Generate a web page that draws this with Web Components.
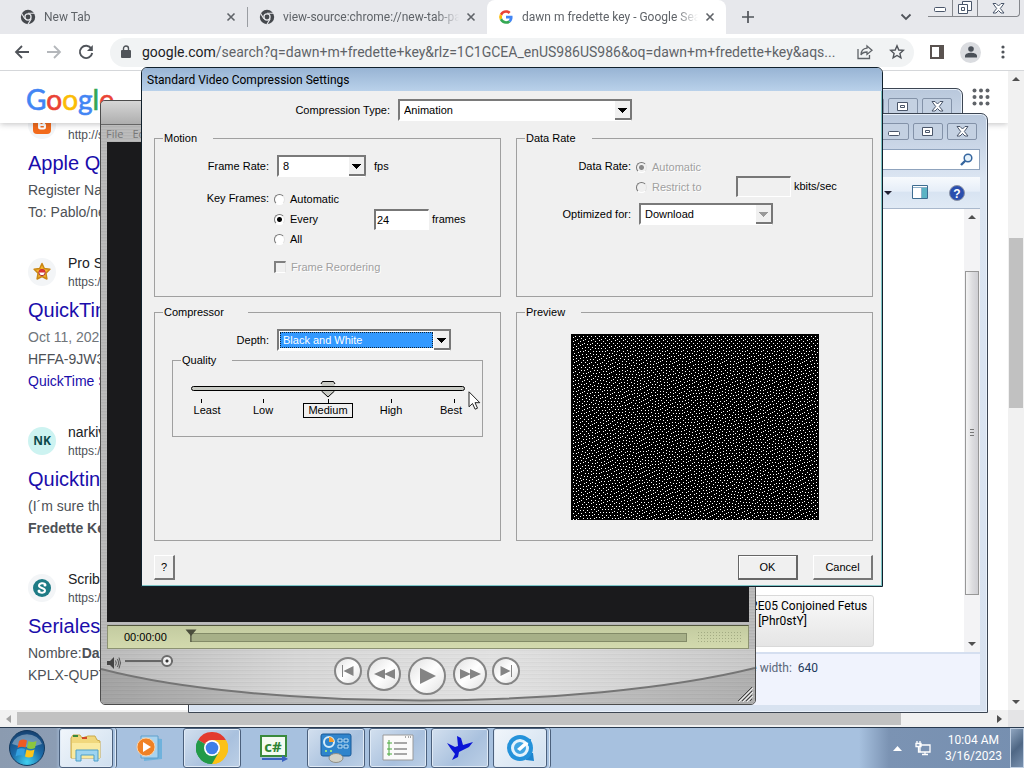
<!DOCTYPE html>
<html lang="en">
<head>
<meta charset="utf-8">
<title>Desktop</title>
<style>
html,body{margin:0;height:100%;overflow:hidden}
body{font-family:"Liberation Sans",Arial,sans-serif;--ui:Roboto,"Segoe UI",sans-serif}
</style>
</head>
<body>
<desk-top></desk-top>
<script>
const define = (name, html, ready) => customElements.define(name, class extends HTMLElement {
  constructor() {
    super();
    const t = document.createElement('template');
    t.innerHTML = '<style>*{box-sizing:border-box}[hidden]{display:none}</style>' + html;
    this.attachShadow({ mode: 'open' }).append(t.content.cloneNode(true));
  }
  connectedCallback() { if (ready) ready(this, this.shadowRoot); }
});

/* ---------- shared pieces ---------- */
define('scroll-bar', `
<style>
:host{display:flex;flex-direction:column;justify-content:space-between;align-items:center;background:#f1f1f1;position:relative;box-sizing:border-box;padding:6px 0}
:host([dir-x]){flex-direction:row;padding:0 6px}
i{width:0;height:0;border:4px solid transparent}
.a{border-top:0;border-bottom:4px solid #505050}
.b{border-bottom:0;border-top:4px solid #505050}
:host([dir-x]) .a{border:4px solid transparent;border-left:0;border-right:5px solid #a3a3a3}
:host([dir-x]) .b{border:4px solid transparent;border-right:0;border-left:5px solid #505050}
.t{position:absolute;background:var(--thumb,#c1c1c1);left:var(--l,1px);right:var(--r,1px);top:var(--t,0);bottom:var(--b,0);border:var(--tb,0)}
.t::after{content:"";position:absolute;left:4px;right:4px;top:calc(50% - 4px);height:8px;background:repeating-linear-gradient(#777 0 1px,transparent 1px 3px);display:var(--grip,none)}
</style><i class="a"></i><span class="t"></span><i class="b"></i>`);

define('caption-buttons', `
<style>
:host{display:flex;gap:4px}
button{width:30px;height:17px;padding:0;border:1px solid #8392a8;border-radius:2px;background:#c4d1e2;display:grid;place-items:center}
button:first-child{width:33px}
.r{display:none}
:host([joined]) .r{display:block}
:host([joined]) .m{display:none}
:host([joined]){gap:0}
:host([joined]) button{border-radius:0;border-left:0;border-top:0;background:none;border-color:#85878c;width:25px}
:host([joined]) button:first-child{border-left:1px solid #85878c;border-radius:0 0 0 4px;width:26px}
:host([joined]) button:last-child{width:42px;border-radius:0 0 4px 0}
svg{fill:#fff;stroke:#4a566a;display:block}
</style>
<button aria-label="Minimize"><svg width="13" height="12"><rect x=".5" y="5.500" width="11" height="4" rx="1"/></svg></button>
<button aria-label="Maximize"><svg class="m" width="12" height="10"><path d="M.5.5h10v8h-10z"/><path d="M3.500 3.500h4v2h-4z"/></svg><svg class="r" width="14" height="14"><path d="M4.500.5h9v9h-9z"/><path d="M.5 3.500h9v9h-9z"/><path d="M3.500 6.500h3v3h-3z"/></svg></button>
<button aria-label="Close"><svg width="13" height="11"><path d="M1 .5h3L6.500 3 9 .5h3L8.300 5.500 12 10H9L6.500 7.500 4 10H1l3.700-4.500z"/></svg></button>`);

/* ---------- browser ---------- */
define('chrome-tab', `
<style>
:host{display:flex;align-items:center;box-sizing:border-box;width:239px;height:34px;padding:0 8px 0 11px;font:12px/16px var(--ui);color:#5f6368;position:relative}
:host([active]){background:#fff;border-radius:8px 8px 0 0}
:host([line]){border-right:1px solid #9a9da2;height:20px}
.t{flex:1;margin:0 4px 0 8px;overflow:hidden;white-space:nowrap;-webkit-mask:linear-gradient(90deg,#000 87%,transparent)}
button{width:16px;height:16px;border:0;background:none;padding:0}
svg{display:block}
::slotted(svg){flex:none}
</style>
<slot name="icon"></slot><span class="t"><slot></slot></span>
<button aria-label="Close tab"><svg width="16" height="16"><path d="M4.500 4.500l7 7m0-7l-7 7" stroke="#5f6368" stroke-width="1.600"/></svg></button>`);

define('search-result', `
<style>
:host{display:block;margin-bottom:29px;white-space:nowrap;color:#4d5156;font-size:14px;line-height:22px}
header{display:flex;align-items:center;gap:12px;height:40px;margin-bottom:4px}
.ic{width:28px;height:28px;border-radius:50%;background:#f3f5f7;display:grid;place-items:center;overflow:hidden}
.n{color:#202124;line-height:20px;min-height:20px}
.u{font-size:12px;line-height:18px}
h3{margin:0 0 2px;font-size:20px;line-height:28px;font-weight:400;color:#1a0dab}
</style>
<header><span class="ic"><slot name="icon"></slot></span><div><div class="n"><slot name="name"></slot></div><div class="u"><slot name="url"></slot></div></div></header>
<h3><slot name="title"></slot></h3><slot></slot>`);

const chromeMono = `<svg slot="icon" width="16" height="16" viewBox="0 0 16 16"><circle cx="8" cy="8" r="7.200" fill="#45484d"/><circle cx="8" cy="8" r="3.700" fill="#e7e8ec"/><circle cx="8" cy="8" r="2.400" fill="#45484d"/><path d="M8 4.300h7M4.800 9.800L1.500 4.200M11.200 9.800L7.800 15.600" stroke="#e7e8ec" stroke-width="1.100"/></svg>`;

define('browser-window', `
<style>
:host{display:flex;flex-direction:column;background:#fff;overflow:hidden}
.tabs{display:flex;align-items:center;background:#e7e8ec;height:34px;padding-left:9px;flex:none}
.tabs .plus{margin-left:13px}
button{border:0;background:none;padding:0;display:block}
svg{display:block}
.push{margin-left:auto;margin-right:14px}
caption-buttons{align-self:flex-start;margin-right:4px}
.bar{display:flex;align-items:center;height:37px;border-bottom:1px solid #d5d7da;padding:0 11px 0 14px;gap:16px;flex:none}
.omni{flex:1;display:flex;align-items:center;height:29px;background:#f1f3f4;border-radius:15px;padding:0 9px 0 11px;gap:11px;min-width:0}
.url{flex:1;min-width:0;overflow:hidden;white-space:nowrap;font:14px/20px var(--ui);color:#5f6368}
.url b{font-weight:400;color:#202124}
.av{width:21px;height:21px;border-radius:50%;background:#dadce0;display:grid;place-items:center}
.view{flex:1;display:flex;min-height:0}
.page{flex:1;position:relative;overflow:hidden;min-width:0}
.top{position:absolute;inset:0 0 auto 0;height:52px;background:#fff;box-shadow:0 1px 6px #20212447;display:flex;justify-content:space-between;align-items:center;padding:0 18px 0 26px;z-index:1}
.logo{font:28px/40px Lato,sans-serif;text-decoration:none;font-weight:400;margin-top:4px;-webkit-text-stroke:.6px currentColor}
.results{padding:34px 0 0 28px}
.results a{color:#1a0dab;text-decoration:none}
.v{width:16px;--t:167px;--b:302px}
.h{display:flex}
.h scroll-bar{flex:1;height:17px;--t:2px;--b:2px;--l:17px;--r:107px}
.h i{width:16px;background:#e4e4e6}
</style>
<div class="tabs">
 <chrome-tab line>${chromeMono}New Tab</chrome-tab>
 <chrome-tab>${chromeMono}view-source:chrome://new-tab-page</chrome-tab>
 <chrome-tab active><svg slot="icon" width="16" height="16" viewBox="-4 -4 56 56"><path fill="#ea4335" d="M24 9.500c3.500 0 6.700 1.200 9.200 3.600l6.900-6.900C35.900 2.400 30.500 0 24 0 14.600 0 6.500 5.400 2.600 13.200l8 6.200C12.400 13.700 17.700 9.500 24 9.500z"/><path fill="#4285f4" d="M47 24.600c0-1.600-.2-3.100-.4-4.600H24v9h12.900c-.6 3-2.200 5.500-4.800 7.200l7.700 6C44.400 38 47 32 47 24.600z"/><path fill="#fbbc05" d="M10.500 28.600a14.500 14.500 0 010-9.200l-8-6.200a24 24 0 000 21.600z"/><path fill="#34a853" d="M24 48c6.500 0 11.900-2.100 15.900-5.800l-7.700-6c-2.200 1.400-4.900 2.300-8.200 2.300-6.300 0-11.600-4.200-13.500-9.900l-8 6.200C6.500 42.600 14.600 48 24 48z"/></svg>dawn m fredette key - Google Search</chrome-tab>
 <button class="plus" aria-label="New tab"><svg width="18" height="18"><path d="M9 3v12M3 9h12" stroke="#50545a" stroke-width="1.700"/></svg></button>
 <button class="push" aria-label="Search tabs"><svg width="16" height="16"><path d="M3.500 5.500L8 10l4.500-4.500" fill="none" stroke="#50545a" stroke-width="1.800"/></svg></button>
 <caption-buttons joined></caption-buttons>
</div>
<div class="bar">
 <button aria-label="Back"><svg width="16" height="16" fill="none" stroke="#50545a" stroke-width="1.800"><path d="M15 8H2m6-6L2 8l6 6"/></svg></button>
 <button aria-label="Forward"><svg width="16" height="16" fill="none" stroke="#b4b7bb" stroke-width="1.800"><path d="M1 8h13M8 2l6 6-6 6"/></svg></button>
 <button aria-label="Reload"><svg width="16" height="16" fill="none" stroke="#50545a" stroke-width="1.900"><path d="M13.300 4.500A6.200 6.200 0 1014.200 9"/><path d="M14.800 1v6H9z" fill="#50545a" stroke="none"/></svg></button>
 <div class="omni">
  <svg width="10" height="14"><rect y="5" width="10" height="8" rx="1" fill="#505459"/><path d="M2.500 6V3.500a2.500 2.500 0 015 0V6" fill="none" stroke="#505459" stroke-width="1.400"/></svg>
  <div class="url" role="textbox" aria-label="Address"><b>google.com</b>/search?q=dawn+m+fredette+key&amp;rlz=1C1GCEA_enUS986US986&amp;oq=dawn+m+fredette+key&amp;aqs...</div>
  <button aria-label="Share"><svg width="16" height="16" fill="none" stroke="#5f6368" stroke-width="1.300"><path d="M1 5v9.500h11.500V11"/><path d="M10 2l5 4.200-5 4.200V8C7 8 5 9 4 11c0-3.500 2-6.400 6-6.800z"/></svg></button>
  <button aria-label="Bookmark" style="margin-left:5px"><svg width="16" height="16"><path d="M8 1.800l1.800 4.200 4.500.4-3.400 3 1 4.500L8 11.500l-3.900 2.400 1-4.500-3.400-3 4.500-.4z" fill="none" stroke="#50545a" stroke-width="1.400"/></svg></button>
 </div>
 <button aria-label="Side panel"><svg width="14" height="14"><path d="M1 1h12v12H1z" fill="none" stroke="#5a5350" stroke-width="2"/><path d="M9 1h4v12H9z" fill="#5a5350"/></svg></button>
 <span class="av"><svg width="12" height="12" fill="#4a5058"><circle cx="6" cy="3" r="2.800"/><path d="M0 11.500V10c0-2.500 4-3.200 6-3.200s6 .7 6 3.200v1.500z"/></svg></span>
 <button aria-label="Menu"><svg width="16" height="16" fill="#50545a"><circle cx="6" cy="3" r="1.600"/><circle cx="6" cy="8" r="1.600"/><circle cx="6" cy="13" r="1.600"/></svg></button>
</div>
<div class="view">
 <div class="page">
  <div class="top"><a class="logo" href="#" aria-label="Google"><span style="color:#4285f4">G</span><span style="color:#ea4335">o</span><span style="color:#fbbc05">o</span><span style="color:#4285f4">g</span><span style="color:#34a853">l</span><span style="color:#ea4335">e</span></a>
  <svg width="18" height="18" fill="#5f6368"><g id="r"><circle cx="2.500" cy="2.500" r="2"/><circle cx="9" cy="2.500" r="2"/><circle cx="15.500" cy="2.500" r="2"/></g><use href="#r" y="6.500"/><use href="#r" y="13"/></svg></div>
  <div class="results">
   <search-result><svg slot="icon" width="18" height="18"><rect width="18" height="18" rx="4" fill="#f26a1b"/><path d="M5 7a2.500 2.500 0 012.500-2.500h2A2.500 2.500 0 0112 7c0 1 .5 1 1 1.500V11a2.500 2.500 0 01-2.500 2.500h-3A2.500 2.500 0 015 11z" fill="#fff"/><path d="M7.500 7.200h2m-2 3.600h3.300" stroke="#f26a1b" stroke-width="1.500"/></svg>
    <span slot="url">http://s</span><a slot="title" href="#">Apple Q</a><div>Register Na</div><div>To: Pablo/ne</div></search-result>
   <search-result><svg slot="icon" width="20" height="20"><path d="M10 1.500l2.300 5 5.600.7-4 4 1 5.800L10 14.500 5.100 17l1-5.800-4-4 5.600-.7z" fill="#f7b52c" stroke="#c98716" stroke-linejoin="round" stroke-width="1.500"/><circle cx="10" cy="10.500" r="3.200" fill="#fff" stroke="#a33"/><path d="M6.800 10.500a3.200 3.200 0 016.400 0z" fill="#d33"/></svg>
    <span slot="name">Pro S</span><span slot="url">https:/</span><a slot="title" href="#">QuickTin</a><div style="color:#70757a">Oct 11, 202</div><div>HFFA-9JW3</div><a href="#">QuickTime S</a></search-result>
   <search-result><b slot="icon" style="background:#cdf3f1;color:#0d4a4c;font:bold 12px/28px 'Open Sans',sans-serif;width:28px;text-align:center">NK</b>
    <span slot="name">narkiv</span><span slot="url">https:/</span><a slot="title" href="#">Quicktin</a><div>(I´m sure th</div><b>Fredette Ke</b></search-result>
   <search-result><svg slot="icon" width="18" height="18"><circle cx="9" cy="9" r="9" fill="#1e7b85"/><path d="M12.500 5.500C11 3.500 6 3.800 6 6.800c0 2.500 6 2 6 4.800 0 2.600-4.800 2.800-6.500.8" fill="none" stroke="#fff" stroke-width="2"/><circle cx="12" cy="6" r="1.500" fill="#fff"/><circle cx="6" cy="12" r="1.500" fill="#fff"/></svg>
    <span slot="name">Scrib</span><span slot="url">https:/</span><a slot="title" href="#">Seriales</a><div>Nombre:<b>Dav</b></div><div>KPLX-QUPT</div></search-result>
  </div>
 </div>
 <scroll-bar class="v"></scroll-bar>
</div>
<div class="h"><scroll-bar dir-x></scroll-bar><i></i></div>`);

/* ---------- explorer ---------- */
define('explorer-window', `
<style>
:host{display:flex;flex-direction:column;box-sizing:border-box;border:1px solid #3c4552;border-radius:7px 7px 0 0;background:linear-gradient(#b9c8dc,#dbe5f2 64px,#d8e2f0);padding:0 7px 7px;box-shadow:inset 0 0 0 1px #e8f0fa}
:host([bare]) :is(.s,.tb,.m,.d){display:none}
caption-buttons{justify-content:flex-end;padding:9px 3px 0 0;height:35px;flex:none}
.s{display:flex;justify-content:flex-end;margin-bottom:7px}
.s label{display:flex;align-items:center;width:200px;height:21px;border:1px solid #8fa3bd;background:#fff;padding-right:6px}
input{border:0;flex:1;min-width:0;background:none;padding:0}
.tb{display:flex;justify-content:flex-end;align-items:center;height:32px;padding-right:15px;background:linear-gradient(#f7fafd,#e6eef8 45%,#d8e4f2 50%,#e0eaf5);border-bottom:1px solid #a9b8cc;gap:20px;flex:none}
button{border:0;background:none;padding:0;display:block}
svg{display:block}
.m{flex:1;display:flex;min-height:0;background:#fff;border-bottom:2px solid #d5dff0}
.c{flex:1;display:flex;align-items:flex-end;justify-content:flex-end;padding:0 90px 5px 0}
.item{width:300px;height:52px;border:1px solid #d9d9d9;border-radius:3px;background:linear-gradient(#fafafa,#e5e5e5);font:12px/15px var(--ui);padding:3px 6px 0 176px;white-space:nowrap;color:#000}
scroll-bar{width:16px;--t:62px;--b:57px;--thumb:linear-gradient(90deg,#f4f4f4,#dcdcdf 55%,#cfcfd4);--tb:1px solid #979797;--grip:block;background:#f3f3f5}
.d{height:51px;background:#f0f3fd;font:12px/16px var(--ui);padding:6px 162px;text-align:right;color:#5a6779;flex:none}
.d b{font-weight:400;color:#1e395b;margin-left:3px}
</style>
<caption-buttons></caption-buttons>
<div class="s"><label><input aria-label="Search"><svg width="13" height="13" fill="#e4f1fb" stroke="#36669f"><path d="M5.500 7.500L1 12" stroke-width="2.400"/><circle cx="8" cy="5" r="3.800" stroke-width="1.500"/></svg></label></div>
<div class="tb">
<button aria-label="Views"><svg width="8" height="16"><path d="M0 6h8L4 10z" fill="#223"/></svg></button>
<button aria-label="Preview pane"><svg width="17" height="15"><path d="M.5.5h15v13H.5z" fill="#fff" stroke="#3d6c90"/><path d="M10 3h5v10h-5z" fill="#5bb3c4"/><path d="M1 2.500h14M9.500 3v10" stroke="#8fb0c8"/></svg></button>
<button aria-label="Help"><svg width="16" height="16"><circle cx="8" cy="8" r="7.500" fill="#2b4fae" stroke="#8b93a5"/><text x="8" y="12.500" text-anchor="middle" fill="#fff" font-family="Liberation Sans" font-weight="bold" font-size="12">?</text></svg></button></div>
<div class="m"><div class="c"><div class="item">2E05 Conjoined Fetus<br>) [Phr0stY]</div></div><scroll-bar></scroll-bar></div>
<div class="d">e width: <b>640</b></div>`);

/* ---------- QuickTime player ---------- */
define('quicktime-player', `
<style>
:host{display:flex;flex-direction:column;box-sizing:border-box;border:1px solid #4c4c4c;border-radius:5px;overflow:hidden;background:repeating-linear-gradient(#bdbdbd 0 1px,#b3b3b3 1px 2px,#b9b9b9 2px 3px)}
.tt{height:24px;background:linear-gradient(#d6d6d6,#aeaeae);border-bottom:1px solid #666;flex:none}
nav{display:flex;gap:9px;font:11px/18px "Open Sans",sans-serif;color:#777;padding-left:5px;height:17px;flex:none}
.v{flex:1;background:#1a1a1c;margin:0 6px 3px}
.tl{display:flex;align-items:center;height:24px;margin:0 6px;background:linear-gradient(#c3cba0,#d3daae);border:1px solid #8c9272;border-top-color:#55593f;padding:0 5px 0 16px;font-size:11px;line-height:14px;flex:none}
.tr{flex:1;height:9px;margin:0 10px 0 23px;background:#a7b088;border:1px solid #838b68;position:relative}
.tr svg{position:absolute;left:-6px;top:-5px}
.eq{width:46px;height:13px;background:radial-gradient(#a3ab83 40%,transparent 45%) 0 0/3px 3px}
.ct{height:55px;position:relative;display:flex;padding:8px 6px;flex:none;background:linear-gradient(90deg,#0002,transparent 30%,#fff4 60%,#0001),repeating-linear-gradient(#dadada 0 1px,#cfcfcf 1px 2px,#d6d6d6 2px 4px)}
.arc{position:absolute;inset:0;width:100%;height:100%}
.vol{display:flex;align-items:flex-start;gap:4px;position:relative;width:227px}
input{appearance:none;width:48px;height:12px;margin:-2px 0 0;background:linear-gradient(#666,#666) 0 5px/100% 2px no-repeat}
input::-webkit-slider-thumb{appearance:none;width:12px;height:12px;border-radius:50%;border:2px solid #6b6b6b;background:radial-gradient(#333 1px,#f0f0f0 2px)}
.b{display:flex;align-items:flex-start;gap:5px;position:relative}
.b button{width:34px;height:34px;border-radius:50%;border:2px solid #858585;background:linear-gradient(135deg,#e0e0e0,#fff 50%,#e2e2e2);padding:0;display:grid;place-items:center}
.b .s{width:28px;height:28px}.b .l{width:38px;height:38px;margin:0 2px}
svg{display:block}
.b svg{fill:#848484}
.grip{position:absolute;right:2px;bottom:2px}
</style>
<div class="tt"></div><nav><span>File</span><span>Edit</span></nav>
<div class="v"></div>
<div class="tl"><time>00:00:00</time><div class="tr"><svg width="12" height="13"><path d="M.5.500h11L6 7z" fill="#4a4d3c"/><path d="M6 6v7" stroke="#4a4d3c"/></svg></div><span class="eq"></span></div>
<div class="ct">
<svg class="arc" viewBox="0 0 654 55" preserveAspectRatio="none"><path d="M0 20C160 62 480 62 654 19V55H0z" fill="#0000001f"/><path d="M0 20C160 62 480 62 654 19" fill="none" stroke="#757575" stroke-width="2"/></svg>
<div class="vol"><svg width="14" height="12"><path d="M0 4h3l4-4v12L3 8H0z" fill="#444"/><path d="M8.500 3.500q1.600 2.500 0 5M10.500 2q2.600 4 0 8M12 .5q3 5.500 0 11" fill="none" stroke="#555"/></svg><input type="range" aria-label="Volume" value="100"></div>
<div class="b">
<button class="s" aria-label="Start"><svg width="12" height="12"><path d="M0 0h1v12H0zM11.500 1v10L1.500 6z"/></svg></button>
<button aria-label="Rewind"><svg width="21" height="12"><path d="M11 1v10L0 6zM21 1v10L10 6z"/></svg></button>
<button class="l" aria-label="Play"><svg width="18" height="18"><path d="M2 1l16 8-16 8z"/></svg></button>
<button aria-label="Forward"><svg width="21" height="12"><path d="M0 1v10l11-5zM10 1v10l11-5z"/></svg></button>
<button class="s" aria-label="End"><svg width="12" height="12"><path d="M11 0h1v12h-1zM.5 1v10l10-5z"/></svg></button></div>
<svg class="grip" width="16" height="16" stroke="#444"><path d="M1 15L15 1M5 15L15 5M9 15l6-6M13 15l2-2"/><path d="M2 16L16 2M6 16L16 6M10 16l6-6" stroke="#eee"/></svg>
</div>`);

/* ---------- compression dialog ---------- */
define('group-box', `
<style>
:host{display:block;min-width:0}
fieldset{margin:0;padding:0;border:1px solid #a0a0a0;min-width:0;height:100%;box-shadow:none}
legend{margin-left:8px;padding:0 var(--gap,16px) 0 1px;line-height:14px}
</style><fieldset><legend></legend><slot></slot></fieldset>`,
(h, r) => { r.querySelector('legend').textContent = h.getAttribute('label'); });

define('dither-preview', `
<style>:host{display:block;width:248px;height:186px}canvas{display:block}</style><canvas width="248" height="186"></canvas>`,
(h, r) => {
  /* a flat dark grey reduced to one bit by error diffusion */
  const c = r.querySelector('canvas'), g = c.getContext('2d'), W = 248, H = 186;
  g.fillStyle = '#000'; g.fillRect(0, 0, W, H); g.fillStyle = '#fff';
  let row = new Float32Array(W + 2), next;
  for (let y = 0; y < H; y++) {
    next = new Float32Array(W + 2);
    for (let x = 1; x <= W; x++) {
      const v = .105 + row[x], on = v > .5, e = v - (on ? 1 : 0);
      if (on) g.fillRect(x - 1, y, 1, 1);
      row[x + 1] += e * 7 / 16; next[x - 1] += e * 3 / 16; next[x] += e * 5 / 16; next[x + 1] += e / 16;
    }
    row = next;
  }
});

define('compression-dialog', `
<style>
:host{display:block;box-sizing:border-box;background:#f0f0f0;border:1px solid #10202c;border-radius:6px 6px 0 0;font-size:11px;line-height:14px;color:#000;overflow:hidden}
h1{margin:0;font:12px/24px var(--ui);padding-left:5px;height:23px;background:linear-gradient(#98b4d4,#b9d1ea)}
.body{padding:8px 8px 5px 12px;border-right:1px solid #7cc4c4;border-bottom:1px solid #7cc4c4}
.row{display:flex;align-items:center;gap:8px}
.row>label:first-child,.lab{width:114px;text-align:right;flex:none}
.type{padding-bottom:10px}
.type>label:first-child{width:236px}
.cols{display:grid;grid-template-columns:347fr 357fr;gap:8px 15px}
.sel{--ar:linear-gradient(#000,#000);position:relative;display:flex;height:22px;border:2px solid;border-color:#7a7a7a #b8b8b8 #fff #7a7a7a;border-right:1px solid #777;background:#fff}
.sel.off{--ar:linear-gradient(#999,#999)}
.sel select{appearance:none;flex:1;width:100%;border:0;background:none;font:inherit;color:#000;padding:0 20px 0 4px;border-radius:0;outline:0}
.sel::after{content:"";position:absolute;right:0;top:0;bottom:-1px;width:16px;background:var(--ar) 3px 7px/9px 1px no-repeat,var(--ar) 4px 8px/7px 1px no-repeat,var(--ar) 5px 9px/5px 1px no-repeat,var(--ar) 6px 10px/3px 1px no-repeat,var(--ar) 7px 11px/1px 1px no-repeat,#f0f0f0;border-right:1px solid #777;border-bottom:2px solid #777;pointer-events:none;box-sizing:border-box}
.sel.hot select{background:#3399ff;color:#fff;outline:1px dotted #123;outline-offset:-1px;margin:1px 17px 1px 1px;padding-left:3px}
.k{display:flex;align-items:center;gap:5px}
.k .lab{align-self:flex-start;line-height:18px}
.opts{width:95px;display:grid;grid-auto-rows:20px}
.o{display:flex;align-items:center;gap:5px}
.o input{appearance:none;flex:none;margin:0;width:11px;height:11px;border-radius:50%;background:#fff;border:1px solid;border-color:#777 #e3e3e3 #fff #777}
.o input:checked{background:radial-gradient(circle,#000 2px,#fff 3px)}
.o input[type=checkbox]{border-radius:0;background:#f0f0f0;width:12px;height:12px;border-width:2px 1px 1px 2px;border-color:#808080 #e3e3e3 #fff #808080}
.o.off{color:#a0a0a0;text-shadow:1px 1px #fff}
.o.off input{background:#f0f0f0}
.o.off input:checked{background:radial-gradient(circle,#888 2px,#f0f0f0 3px)}
.txt{width:55px;height:21px;margin:0;border:2px solid;border-color:#777 #fff #fff #777;border-width:2px 1px 1px 2px;background:#fff;font:inherit;padding:0 1px;border-radius:0}
.txt:disabled{background:#f0f0f0}
.txt+label{margin-left:-2px}
.motion{padding:10px 0 19px}
.rate{padding-top:12px}
.comp{padding:10px 0 103px}
.q{display:block;margin:2px 17px 0;--gap:16px}
.qi{padding:13px 17px 18px 18px;position:relative}
.qi input{appearance:none;display:block;width:100%;height:16px;margin:0;background:none;border:0}
.qi input::-webkit-slider-runnable-track{height:5px;border:1px solid #000;border-radius:3px;background:#c8cac4;box-sizing:border-box}
.qi input::-webkit-slider-thumb{appearance:none;width:16px;height:17px;margin-top:-6px;background:url("data:image/svg+xml,%3Csvg xmlns='http://www.w3.org/2000/svg' width='16' height='17'%3E%3Cpath d='M1.500 10V2.500l1-2h11l1 2V10L8 16z' fill='%23c8cac4'/%3E%3Cpath d='M1 3l1.500-2.500h11L15 3M1 5.500h14M1 9.500h14M1.500 10L8 16l6.500-6' fill='none' stroke='%23000'/%3E%3C/svg%3E")}
.marks{display:grid;grid-template-columns:32px 80fr 50px 84fr 28px;margin-top:2px;text-align:center}
.marks span{display:flex;flex-direction:column;align-items:center;padding-top:5px;line-height:15px;background:linear-gradient(#000,#000) 50% 1px/1px 4px no-repeat}
.marks .a{background-position:10px 1px}.marks .z{background-position:17px 1px}
.marks .hi{margin-right:8px}
.marks b{font-weight:400;border:1px solid #000;line-height:13px;width:50px;background:#f0f0f0}
.pv{display:flex;justify-content:center;padding-top:15px}
.foot{display:flex;gap:15px;margin-top:14px}
.foot button{height:25px;width:60px;font:inherit;color:#000;background:#f0f0f0;border:1px solid;border-color:#fff #777 #777 #fff;border-width:1px 2px 2px 1px;border-radius:0;padding:0}
.foot .help{width:21px;margin-right:auto}
.foot .ok{border-color:#666;box-shadow:inset 1px 1px #fff}
</style>
<h1>Standard Video Compression Settings</h1>
<div class="body">
<div class="row type"><label for="ct">Compression Type:</label><span class="sel" style="width:234px"><select id="ct"><option>Animation</option></select></span></div>
<div class="cols">
<group-box label="Motion"><div class="motion">
 <div class="row"><label for="fr">Frame Rate:</label><span class="sel" style="width:89px"><select id="fr"><option>8</option></select></span><span>fps</span></div>
 <div class="k" style="margin-top:12px"><span class="lab">Key Frames:</span>
  <div class="opts"><label class="o"><input type="radio" name="k">Automatic</label><label class="o"><input type="radio" name="k" checked>Every</label><label class="o"><input type="radio" name="k">All</label></div>
  <input class="txt" id="kf" value="24" aria-label="Key frame interval"><label for="kf">frames</label></div>
 <div class="k" style="margin-top:8px"><span class="lab"></span><label class="o off" style="height:20px"><input type="checkbox" disabled>Frame Reordering</label></div>
</div></group-box>
<group-box label="Data Rate"><div class="rate">
 <div class="k"><span class="lab">Data Rate:</span>
  <div class="opts"><label class="o off"><input type="radio" name="d" checked disabled>Automatic</label><label class="o off"><input type="radio" name="d" disabled>Restrict to</label></div>
  <input class="txt" id="kb" disabled style="align-self:flex-end"><label for="kb" style="align-self:flex-end;padding-bottom:4px">kbits/sec</label></div>
 <div class="row" style="margin-top:6px"><label for="op">Optimized for:</label><span class="sel off" style="width:134px"><select id="op"><option>Download</option></select></span></div>
</div></group-box>
<group-box label="Compressor" style="--gap:24px"><div class="comp">
 <div class="row"><label for="dp">Depth:</label><span class="sel hot" style="width:174px"><select id="dp"><option>Black and White</option></select></span></div>
 <group-box class="q" label="Quality"><div class="qi">
  <input type="range" aria-label="Quality" min="0" max="100" value="50">
  <div class="marks"><span class="a">Least</span><span class="lo">Low</span><span><b>Medium</b></span><span class="hi">High</span><span class="z">Best</span></div>
 </div></group-box>
</div></group-box>
<group-box label="Preview"><div class="pv"><dither-preview></dither-preview></div></group-box>
</div>
<div class="foot"><button class="help">?</button><button class="ok">OK</button><button>Cancel</button></div>
</div>`);

/* ---------- taskbar ---------- */
define('task-button', `
<style>
:host{display:block;flex:none;width:58px;height:40px}
button{width:100%;height:100%;padding:0;border:1px solid transparent;border-radius:3px;background:none;display:grid;place-items:center}
:host([open]) button{border-color:#4b607c;background:linear-gradient(135deg,#d3e0ef,#a9c1de 60%,#bdd0e6);box-shadow:inset 0 0 0 1px #dfeaf6}
:host([active]) button{background:linear-gradient(135deg,#f1f6fb,#cfdfef)}
:host([stack]) button{width:54px}
:host([stack]){border-right:1px solid #4b607c;box-sizing:border-box;border-radius:3px;box-shadow:inset -1px 0 #dfeaf6}
</style><button><slot></slot></button>`);

define('task-bar', `
<style>
:host{display:flex;align-items:stretch;gap:4px;height:41px;box-sizing:border-box;border-top:1px solid #2a3b50;background:linear-gradient(90deg,#8b9bb0 0,#8c9db4 56px,#a7c1df 62px,#a7c1df calc(100% - 165px),#7b93b3 calc(100% - 135px),#768fb0)}
.orb{width:55px;border:0;background:none;padding:0;display:grid;place-items:center;flex:none}
svg{display:block}
.tray{margin-left:auto;display:flex;align-items:center;gap:13px;color:#fff;font:12px/16px var(--ui);text-align:center}
.sd{width:14px;align-self:stretch;border:1px solid #c0cfe2;padding:0;background:linear-gradient(135deg,#8fa5bf,#4f6785 50%,#7890ae);margin-left:-5px}
.tray button:first-child{border:0;background:none;padding:0}
</style>
<button class="orb" aria-label="Start"><svg width="38" height="38"><defs><radialGradient id="g" cx=".5" cy=".9" r=".9"><stop offset="0" stop-color="#3fd0f0"/><stop offset=".5" stop-color="#1b6aa8"/><stop offset="1" stop-color="#16406f"/></radialGradient></defs><circle cx="18" cy="19" r="17.500" fill="url(#g)" stroke="#12395f"/><path d="M3 15a15.500 13 0 0130 0Q18 21 3 15z" fill="#fff" opacity=".35"/><path d="M10 12q4-2.500 8-.5l-1.500 7q-4-1.500-8 .5z" fill="#ee5a24"/><path d="M19.500 12q3.500 2 8 0l-1.500 7q-4 2-8 0z" fill="#8cc63f"/><path d="M8 20.500q4-2 8-.5l-1.500 7q-4-1.500-8 .5z" fill="#33a0e0"/><path d="M17.500 20.500q4 2 8 0l-1.500 7q-4 2-8 0z" fill="#fcc419"/></svg></button>
<task-button open active stack aria-label="Explorer"><svg width="34" height="30"><path d="M2 5l2-3h7l2 3 6-2h7l2 4 3 1v17H2z" fill="#f0d77c" stroke="#c9a94a"/><path d="M3 10h28v15H3z" fill="#faeaa0"/><path d="M4 3h5" stroke="#3a8a3a" stroke-width="2"/><path d="M13 5h5" stroke="#d04a2a" stroke-width="2"/><path d="M7 28V17h22v11h-4v-6H12v6z" fill="#9dd4f0" stroke="#4d9fc8"/></svg></task-button>
<task-button aria-label="Media Player"><svg width="28" height="28"><path d="M8 3l18 2v20L8 27z" fill="#6fb2dc"/><path d="M5 2h17v22H5z" fill="#a9d3ee" stroke="#5fa0cc"/><circle cx="10" cy="13" r="9" fill="#f08124" stroke="#fbd2a8"/><path d="M7 8v10l8-5z" fill="#fff"/></svg></task-button>
<task-button open aria-label="Chrome"><svg width="32" height="32" viewBox="0 0 32 32"><path d="M16 16L2.140 8A16 16 0 0129.860 8z" fill="#e33b2e"/><path d="M16 16L29.860 8A16 16 0 0116 32z" fill="#fbc116"/><path d="M16 16v16A16 16 0 012.140 8z" fill="#229a48"/><path d="M16 8h13.860A16 16 0 0116 32l6.900-12z" fill="#fbc116"/><path d="M9.100 20L2.140 8A16 16 0 0016 32l6.900-12z" fill="#229a48"/><circle cx="16" cy="16" r="8" fill="#fff"/><circle cx="16" cy="16" r="6.300" fill="#3f7ee8"/></svg></task-button>
<task-button aria-label="C# Express"><svg width="30" height="28"><path d="M2 2h25v20H2z" fill="#f4fbf2" stroke="#3a8a3c" stroke-width="2"/><text x="14" y="18" text-anchor="middle" font-family="Open Sans" font-weight="bold" font-size="15" fill="#2f8433">c#</text><path d="M3 24h20v-3l6 4-6 3v-2H3z" fill="#3b62c0"/></svg></task-button>
<task-button open aria-label="Control Panel"><svg width="34" height="30"><rect x="2" y="1" width="30" height="22" rx="2" fill="#2f84cc" stroke="#1a5b98"/><circle cx="10" cy="9" r="5" fill="none" stroke="#d5ecfa" stroke-width="2"/><path d="M10 9V4a5 5 0 015 5z" fill="#f59c2b"/><path d="M19 6h4v3h-4zM25 6h4v3h-4zM19 12h4v3h-4zM25 12h4v3h-4z" fill="#1d6cb3" stroke="#bfe0f5"/><path d="M6 18h2m3 0h2" stroke="#8fe08a" stroke-width="2"/><ellipse cx="17" cy="25" rx="7" ry="4.500" fill="#d2d2c8" stroke="#8e8e86"/></svg></task-button>
<task-button open aria-label="Task list"><svg width="32" height="28"><path d="M1 1h30v25H1z" fill="#fafafa" stroke="#9a9a9a"/><path d="M12 9h13M12 15h13M12 20h13" stroke="#555"/><path d="M7 6v16M5 9h5M5 15h5M5 20h5" stroke="#49a83c"/><path d="M23 3h1m2 0h1m1 0h1" stroke="#555"/></svg></task-button>
<task-button open aria-label="Bird"><svg width="28" height="26"><path d="M11 1l4 2 2 7 10-3-4 5-6 3-4 2 -1 5-6 3 3-6-4-5-4-6 8 4 3-1z" fill="#0a14d6"/></svg></task-button>
<task-button open active stack aria-label="QuickTime"><svg width="30" height="30"><path d="M21 20h7l1 8-8-1z" fill="#1d85cf"/><circle cx="15" cy="15" r="13" fill="#2492da"/><circle cx="15" cy="15" r="7.500" fill="#3fa4e2" stroke="#e4f3fc" stroke-width="3"/><path d="M20 9l4 1-9 8-3-2z" fill="#fff"/><path d="M17 5l8 2-1 6" fill="none" stroke="#2492da" stroke-width="2"/></svg></task-button>
<div class="tray"><button aria-label="Hidden icons"><svg width="9" height="5"><path d="M4.500 0L9 5H0z" fill="#fff"/></svg></button>
<svg width="17" height="16" fill="none" stroke="#fff" stroke-width="1.300"><path d="M5 5h10v7H5zM10 12v2.500M7 14.500h6M2 1v2m3-2v2M1 3.500h5v3H1zM3.500 6v6H5"/></svg>
<time>10:04 AM<br>3/16/2023</time><button class="sd" aria-label="Show desktop"></button></div>`);

define('desk-top', `
<style>
:host{display:flex;flex-direction:column;height:100vh;min-height:740px;position:relative;overflow:hidden;background:#fff}
browser-window{flex:1;min-height:0;isolation:isolate}
.win{position:absolute}
.back{left:300px;right:61px;top:88px;height:200px}
.front{left:188px;right:36px;top:113px;bottom:55px}
.qt{left:100px;right:268px;top:100px;bottom:63px}
.dlg{left:141px;right:141px;top:67px}
.cur{position:absolute;left:468px;top:391px}
</style>
<browser-window></browser-window><task-bar></task-bar>
<explorer-window class="win back" bare></explorer-window>
<explorer-window class="win front"></explorer-window>
<quicktime-player class="win qt"></quicktime-player>
<compression-dialog class="win dlg"></compression-dialog>
<svg class="cur" width="14" height="20"><path d="M1 .8v15l3.500-3.300 2.600 5.700 2.400-1-2.500-5.500h4.800z" fill="#fff" stroke="#222"/></svg>`);
</script>
</body>
</html>
